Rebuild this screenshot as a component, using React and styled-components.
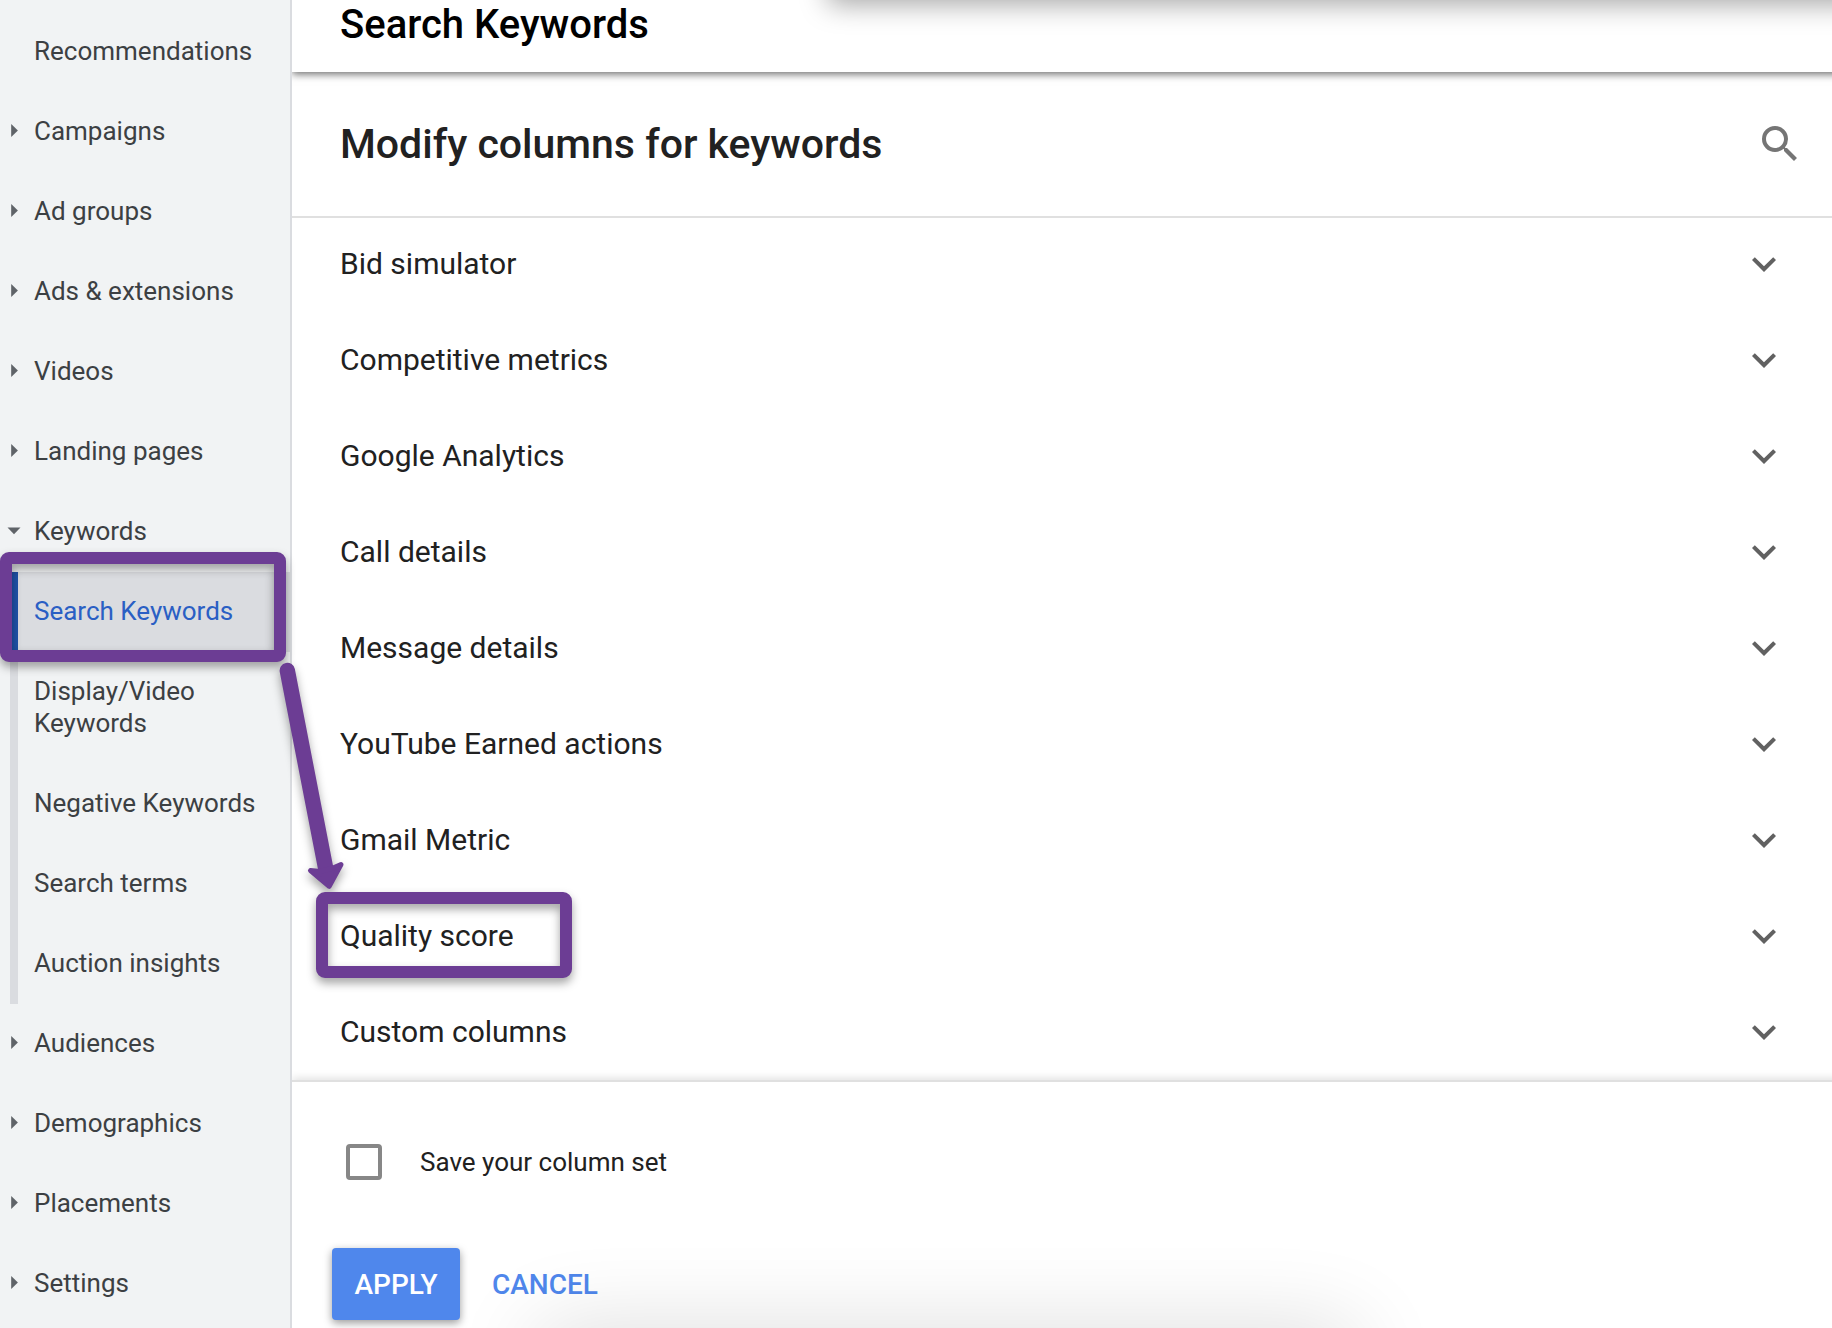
import React, {useState} from 'react';
import styled, {createGlobalStyle} from 'styled-components';
import {MdExpandMore, MdSearch} from 'react-icons/md';

const GlobalStyle = createGlobalStyle`
    * {
        box-sizing: border-box;
    }
    body {
        margin: 0;
        font-family: Roboto, "Liberation Sans", sans-serif;
        color: #212121;
        background: #fff;
    }
    button {
        font-family: inherit;
        border: none;
        cursor: pointer;
    }
`;

const Page = styled.div`
    position: relative;
    display: flex;
    min-height: 100vh;
    overflow: hidden;
`;

const Sidebar = styled.nav`
    flex: none;
    width: 292px;
    padding-top: 12px;
    background: #f1f3f4;
    border-right: 2px solid #dadce0;
`;

const NavLink = styled.a`
    display: flex;
    align-items: center;
    min-height: 80px;
    padding: 23px 24px 25px 0;
    font-size: 26px;
    line-height: 32px;
    color: ${props => props.$active ? '#2a5fc4' : '#3c4043'};
    background: ${props => props.$active ? '#dadce0' : 'transparent'};
    text-decoration: none;
`;

const CaretSlot = styled.span`
    flex: none;
    display: flex;
    width: 34px;
`;

const SubNav = styled.div`
    a {
        min-height: 80px;
        padding-left: 34px;
        background-image: linear-gradient(#dadce0, #dadce0);
        background-repeat: no-repeat;
        background-position: 10px 0;
        background-size: 8px 100%;
    }
    a[aria-current] {
        background-image: linear-gradient(#1f52a8, #1f52a8);
    }
`;

const Main = styled.main`
    position: relative;
    flex: 1;
    display: flex;
    flex-direction: column;
    min-width: 0;
    overflow: hidden;
`;

const Header = styled.header`
    height: 72px;
    margin-right: -12px;
    padding: 0 48px;
    box-shadow: 0 2px 8px rgba(0, 0, 0, 0.6);

    h1 {
        margin: 0;
        font-size: 40px;
        line-height: 50px;
        font-weight: 500;
        color: #000;
    }
`;

const TitleBar = styled.div`
    display: flex;
    align-items: center;
    justify-content: space-between;
    height: 144px;
    padding: 0 28px 0 48px;
    box-shadow: 0 2px 0 #e0e0e0;

    h2 {
        margin: 0;
        font-size: 41px;
        line-height: 50px;
        font-weight: 500;
    }
`;

const IconButton = styled.button`
    display: flex;
    padding: 0;
    font-size: 48px;
    color: #757575;
    background: none;
`;

const Group = styled.button`
    display: flex;
    align-items: center;
    justify-content: space-between;
    width: 100%;
    height: 96px;
    padding: 0 44px 0 48px;
    font-size: 30px;
    line-height: 40px;
    color: #212121;
    text-align: left;
    background: none;

    svg {
        font-size: 48px;
        color: #616161;
    }
`;

const Footer = styled.footer`
    flex: 1;
    margin-right: -12px;
    padding: 40px 40px 8px;
    border-top: 2px solid #e0e0e0;
    box-shadow: 0 -2px 8px rgba(0, 0, 0, 0.12);
`;

const SaveLabel = styled.label`
    display: flex;
    align-items: center;
    gap: 38px;
    height: 80px;
    padding-left: 14px;
    font-size: 26px;
    line-height: 32px;
`;

const Checkbox = styled.input`
    appearance: none;
    width: 36px;
    height: 36px;
    margin: 0;
    border: 4px solid #878787;
    border-radius: 4px;
    background: #fff;
    &:checked {
        background: #878787;
    }
`;

const Actions = styled.div`
    display: flex;
    gap: 16px;
    margin-top: 46px;
`;

const ActionButton = styled.button`
    height: 72px;
    min-width: 128px;
    padding: 0 16px;
    font-size: 28px;
    font-weight: 500;
    border-radius: 4px;
    color: ${props => props.$primary ? '#fff' : '#4f87ec'};
    background: ${props => props.$primary ? '#4f87ec' : 'none'};
    box-shadow: ${props => props.$primary ? '0 3px 8px rgba(0, 0, 0, 0.4)' : 'none'};
`;

// shadows of panels that sit just past the top and bottom edges
const TopShadow = styled.div`
    position: absolute;
    top: -40px;
    left: 536px;
    right: -40px;
    height: 40px;
    box-shadow: 0 4px 28px rgba(0, 0, 0, 0.36);
    pointer-events: none;
`;

const BottomShadow = styled.div`
    position: absolute;
    bottom: -80px;
    left: 16%;
    right: 31%;
    height: 80px;
    box-shadow: 0 0 88px rgba(0, 0, 0, 0.14);
    pointer-events: none;
`;

const Callouts = styled.svg`
    position: absolute;
    top: 540px;
    left: 0;
    pointer-events: none;
    filter: drop-shadow(0 5px 5px rgba(0, 0, 0, 0.36));
`;

const navTop = [
    {name: 'Recommendations'},
    {name: 'Campaigns', caret: 'right'},
    {name: 'Ad groups', caret: 'right'},
    {name: 'Ads & extensions', caret: 'right'},
    {name: 'Videos', caret: 'right'},
    {name: 'Landing pages', caret: 'right'},
    {name: 'Keywords', caret: 'down'},
];

const keywordPages = [
    'Search Keywords',
    'Display/Video Keywords',
    'Negative Keywords',
    'Search terms',
    'Auction insights',
];

const navBottom = [
    {name: 'Audiences', caret: 'right'},
    {name: 'Demographics', caret: 'right'},
    {name: 'Placements', caret: 'right'},
    {name: 'Settings', caret: 'right'},
];

const groups = [
    'Bid simulator',
    'Competitive metrics',
    'Google Analytics',
    'Call details',
    'Message details',
    'YouTube Earned actions',
    'Gmail Metric',
    'Quality score',
    'Custom columns',
];

const Caret = ({direction}) => (
    <CaretSlot>
        {direction && (
            <svg width="28" height="28" viewBox="0 0 28 28" fill="#5f6368" aria-hidden="true">
                <path d={direction === 'down' ? 'M7.5 10.5h13l-6.5 6.7z' : 'M11.2 7v13l6.7-6.5z'} />
            </svg>
        )}
    </CaretSlot>
);

const NavItems = ({items}) => items.map(item => (
    <NavLink key={item.name} href="#">
        <Caret direction={item.caret} />
        {item.name}
    </NavLink>
));

export default function App(){

    const [opened, setOpened] = useState(null);
    const [save, setSave] = useState(false);

    return(
        <>
            <GlobalStyle />
            <Page>
                <Sidebar>
                    <NavItems items={navTop} />
                    <SubNav>
                        {keywordPages.map((name, index) => (
                            <NavLink
                                key={name}
                                href="#"
                                $active={index === 0}
                                aria-current={index === 0 ? 'page' : undefined}
                            >
                                {name}
                            </NavLink>
                        ))}
                    </SubNav>
                    <NavItems items={navBottom} />
                </Sidebar>

                <Main>
                    <Header>
                        <h1>Search Keywords</h1>
                    </Header>
                    <TitleBar>
                        <h2>Modify columns for keywords</h2>
                        <IconButton type="button" aria-label="Search columns">
                            <MdSearch />
                        </IconButton>
                    </TitleBar>
                    <div>
                        {groups.map(name => (
                            <Group
                                key={name}
                                type="button"
                                aria-expanded={opened === name}
                                onClick={() => setOpened(opened === name ? null : name)}
                            >
                                {name}
                                <MdExpandMore />
                            </Group>
                        ))}
                    </div>
                    <Footer>
                        <SaveLabel>
                            <Checkbox
                                type="checkbox"
                                checked={save}
                                onChange={e => setSave(e.target.checked)}
                            />
                            Save your column set
                        </SaveLabel>
                        <Actions>
                            <ActionButton type="button" $primary>APPLY</ActionButton>
                            <ActionButton type="button">CANCEL</ActionButton>
                        </Actions>
                    </Footer>
                    <TopShadow />
                    <BottomShadow />
                </Main>

                <Callouts width="600" height="470" viewBox="0 540 600 470" fill="none" stroke="#6c3d94" aria-hidden="true">
                    <rect x="6" y="558" width="274" height="98" rx="3" strokeWidth="12" />
                    <rect x="322" y="898" width="244" height="74" rx="3" strokeWidth="12" />
                    <path d="M287.3 670.5L326 870" strokeWidth="15.4" strokeLinecap="round" />
                    <path
                        d="M310.5 870.5L320 871.5L333 868L341 864.5L329.2 886.4z"
                        fill="#6c3d94"
                        strokeWidth="5"
                        strokeLinejoin="round"
                    />
                </Callouts>
            </Page>
        </>
    );
}
